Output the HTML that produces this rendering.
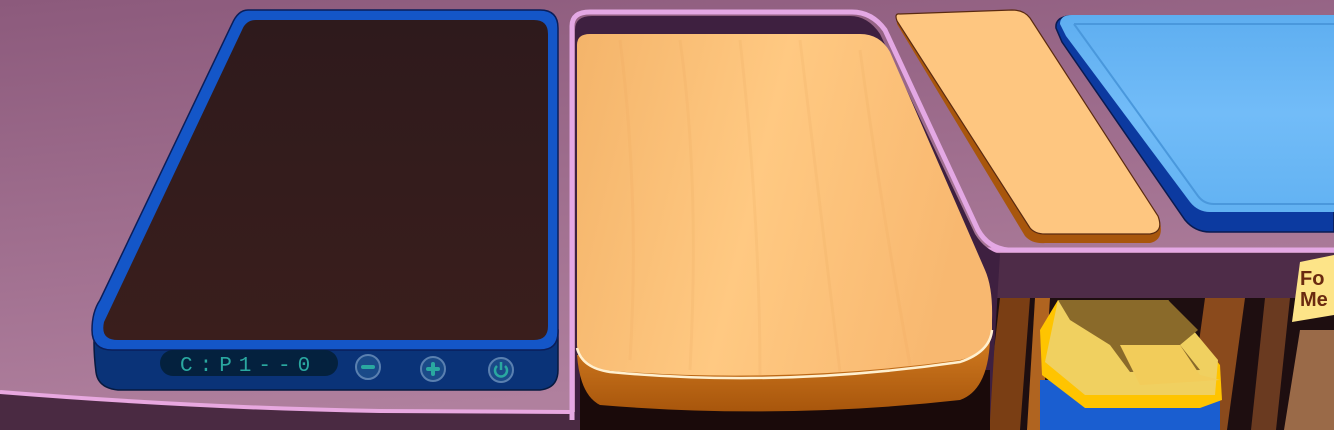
<!DOCTYPE html>
<html><head><meta charset="utf-8"><style>
html,body{margin:0;padding:0;width:1334px;height:430px;overflow:hidden;background:#4a2a42}
svg{display:block}
</style></head><body>
<svg width="1334" height="430" viewBox="0 0 1334 430" xmlns="http://www.w3.org/2000/svg">
<defs>
<linearGradient id="ctr" x1="0" y1="0" x2="0.3" y2="1">
<stop offset="0" stop-color="#8c5a7c"/><stop offset="1" stop-color="#b0809e"/></linearGradient>
<linearGradient id="wood" x1="0" y1="0" x2="1" y2="0.2">
<stop offset="0" stop-color="#f4b46a"/><stop offset="0.5" stop-color="#ffc982"/><stop offset="1" stop-color="#f8b870"/></linearGradient>
<linearGradient id="woodf" x1="0" y1="0" x2="0" y2="1">
<stop offset="0" stop-color="#d07a20"/><stop offset="1" stop-color="#a8560c"/></linearGradient>
<linearGradient id="scr" x1="0" y1="0" x2="0" y2="1">
<stop offset="0" stop-color="#2e1a1c"/><stop offset="1" stop-color="#3a1e1c"/></linearGradient>
<linearGradient id="blue" x1="0" y1="0" x2="0" y2="1">
<stop offset="0" stop-color="#5eaef0"/><stop offset="0.5" stop-color="#72bcf8"/><stop offset="1" stop-color="#62b2f2"/></linearGradient>
</defs>
<rect x="0" y="0" width="1334" height="430" fill="#4a2a42"/>
<path d="M0 0 H1334 V258 H990 L985 400 Q980 412 960 414 L580 412 Q560 412 380 412 Q200 410 0 392 Z" fill="url(#ctr)"/>
<path d="M0 392 Q200 408 380 411 L570 412" stroke="#e8a8e0" stroke-width="4" fill="none"/>
<path d="M985 250 H1334" stroke="#e4a4e0" stroke-width="5"/>
<rect x="985" y="253" width="349" height="45" fill="#4e2c48"/>
<rect x="990" y="298" width="344" height="132" fill="#1e0e10"/>
<path d="M1000 298 h30 l-10 132 h-35 Z" fill="#7a3e14"/>
<path d="M1035 298 h15 l-8 132 h-15 Z" fill="#b06420"/>
<path d="M1205 298 h40 l-18 132 h-40 Z" fill="#8a4a1c"/>
<path d="M1265 298 h25 l-14 132 h-25 Z" fill="#6a3a20"/>
<path d="M1300 330 h34 v100 h-50 Z" fill="#9a6a48"/>
<rect x="1040" y="380" width="180" height="50" fill="#1a5ed0"/>
<path d="M1058 300 H1168 L1220 365 L1222 400 L1200 408 L1085 408 L1042 375 L1040 330 Z" fill="#ffc400"/>
<path d="M1058 300 H1168 L1218 360 L1215 395 L1085 395 L1045 362 Z" fill="#f0d060"/>
<path d="M1058 300 H1168 L1198 330 L1180 345 L1200 370 L1130 372 L1110 345 L1070 320 Z" fill="#8a6a2a"/>
<path d="M1120 345 H1180 L1200 375 L1220 380 L1140 385 Z" fill="#f2cc5a"/>
<path d="M1300 262 L1334 255 V315 L1292 322 Z" fill="#fde488"/>
<text x="1300" y="285" font-family="Liberation Sans, sans-serif" font-weight="bold" font-size="20" fill="#6a2a10">Fo</text>
<text x="1300" y="306" font-family="Liberation Sans, sans-serif" font-weight="bold" font-size="20" fill="#6a2a10">Me</text>
<path d="M572 420 V26 Q572 12 590 12 H852 Q872 12 885 30 L978 230 Q988 248 1008 250 H1334" stroke="#e4a8e4" stroke-width="5" fill="none"/>
<path d="M575 420 V30 Q575 16 592 16 H850 Q868 16 880 34 L975 234 Q985 250 1000 254 L990 420 Z" fill="#3e2040"/>
<rect x="580" y="370" width="410" height="60" fill="#1a0a0a"/>
<path d="M577 355 Q580 395 600 405 Q780 420 960 400 Q988 390 990 340 Z" fill="url(#woodf)"/>
<path d="M577 45 Q577 34 590 34 H860 Q880 34 890 52 L985 270 Q993 288 992 320 L992 335 Q990 352 960 360 Q780 385 600 370 Q577 365 577 345 Z" fill="url(#wood)"/>
<path d="M577 348 Q582 368 610 372 Q780 388 960 362 Q990 352 992 330" stroke="#fff0d0" stroke-width="2.5" fill="none"/>
<g stroke="#e8a458" stroke-width="3" opacity="0.15" fill="none">
<path d="M620 40 Q640 200 630 360"/><path d="M680 40 Q700 180 690 370"/><path d="M740 40 Q760 220 760 375"/><path d="M800 40 Q820 200 840 372"/><path d="M860 50 Q880 200 910 365"/>
</g>
<path d="M902 16 Q896 14 897 24 L1025 236 Q1032 244 1045 243 H1150 Q1164 240 1160 222 L1030 20 Q1024 12 1012 12 Z" fill="#a8560c"/>
<path d="M900 14 Q894 13 897 21 L1030 228 Q1035 234 1045 234 H1150 Q1164 232 1158 216 L1030 18 Q1024 10 1012 10 Z" fill="#fec680" stroke="#5a2a10" stroke-width="1.2"/>
<path d="M1056 28 Q1055 18 1068 16 H1334 V232 H1210 Q1195 232 1185 220 L1062 42 Z" fill="#0c3aa0" stroke="#0a1a50" stroke-width="1.5"/>
<path d="M1060 24 Q1060 15 1072 15 H1334 V212 H1210 Q1198 212 1190 202 L1066 36 Z" fill="url(#blue)"/>
<path d="M1074 24 H1334 M1074 24 L1198 196 Q1204 204 1214 204 H1334" stroke="#4a98dc" stroke-width="2" fill="none"/>
<path d="M96 320 Q92 340 96 372 Q98 388 118 390 L540 390 Q558 388 558 370 L558 330 Z" fill="#0a3378" stroke="#061a40" stroke-width="1.5"/>
<path d="M248 10 H540 Q558 10 558 28 V332 Q558 350 540 350 H112 Q92 350 92 330 Q92 312 100 300 L232 24 Q238 10 248 10 Z" fill="#1456c8" stroke="#0a1e5a" stroke-width="1.5"/>
<path d="M256 20 H534 Q548 20 548 34 V326 Q548 340 534 340 H118 Q100 340 104 322 L242 30 Q246 20 256 20 Z" fill="url(#scr)"/>
<rect x="160" y="350" width="178" height="26" rx="13" fill="#04213e"/>
<text x="180" y="371" font-family="Liberation Mono, monospace" font-size="21" fill="#2aa8a0" letter-spacing="7">C:P1--0</text>
<circle cx="368" cy="367" r="12" fill="#1a4a88" stroke="#5a80b0" stroke-width="2"/>
<rect x="361" y="365" width="14" height="4" rx="2" fill="#2aa8a0"/>
<circle cx="433" cy="369" r="12" fill="#1a4a88" stroke="#5a80b0" stroke-width="2"/>
<rect x="426" y="367" width="14" height="4" rx="2" fill="#2aa8a0"/><rect x="431" y="362" width="4" height="14" rx="2" fill="#2aa8a0"/>
<circle cx="501" cy="370" r="12" fill="#1a4a88" stroke="#5a80b0" stroke-width="2"/>
<path d="M497 366 A6 6 0 1 0 505 366" stroke="#2aa8a0" stroke-width="2.5" fill="none"/><path d="M501 362 V370" stroke="#2aa8a0" stroke-width="2.5"/>
</svg>
</body></html>
